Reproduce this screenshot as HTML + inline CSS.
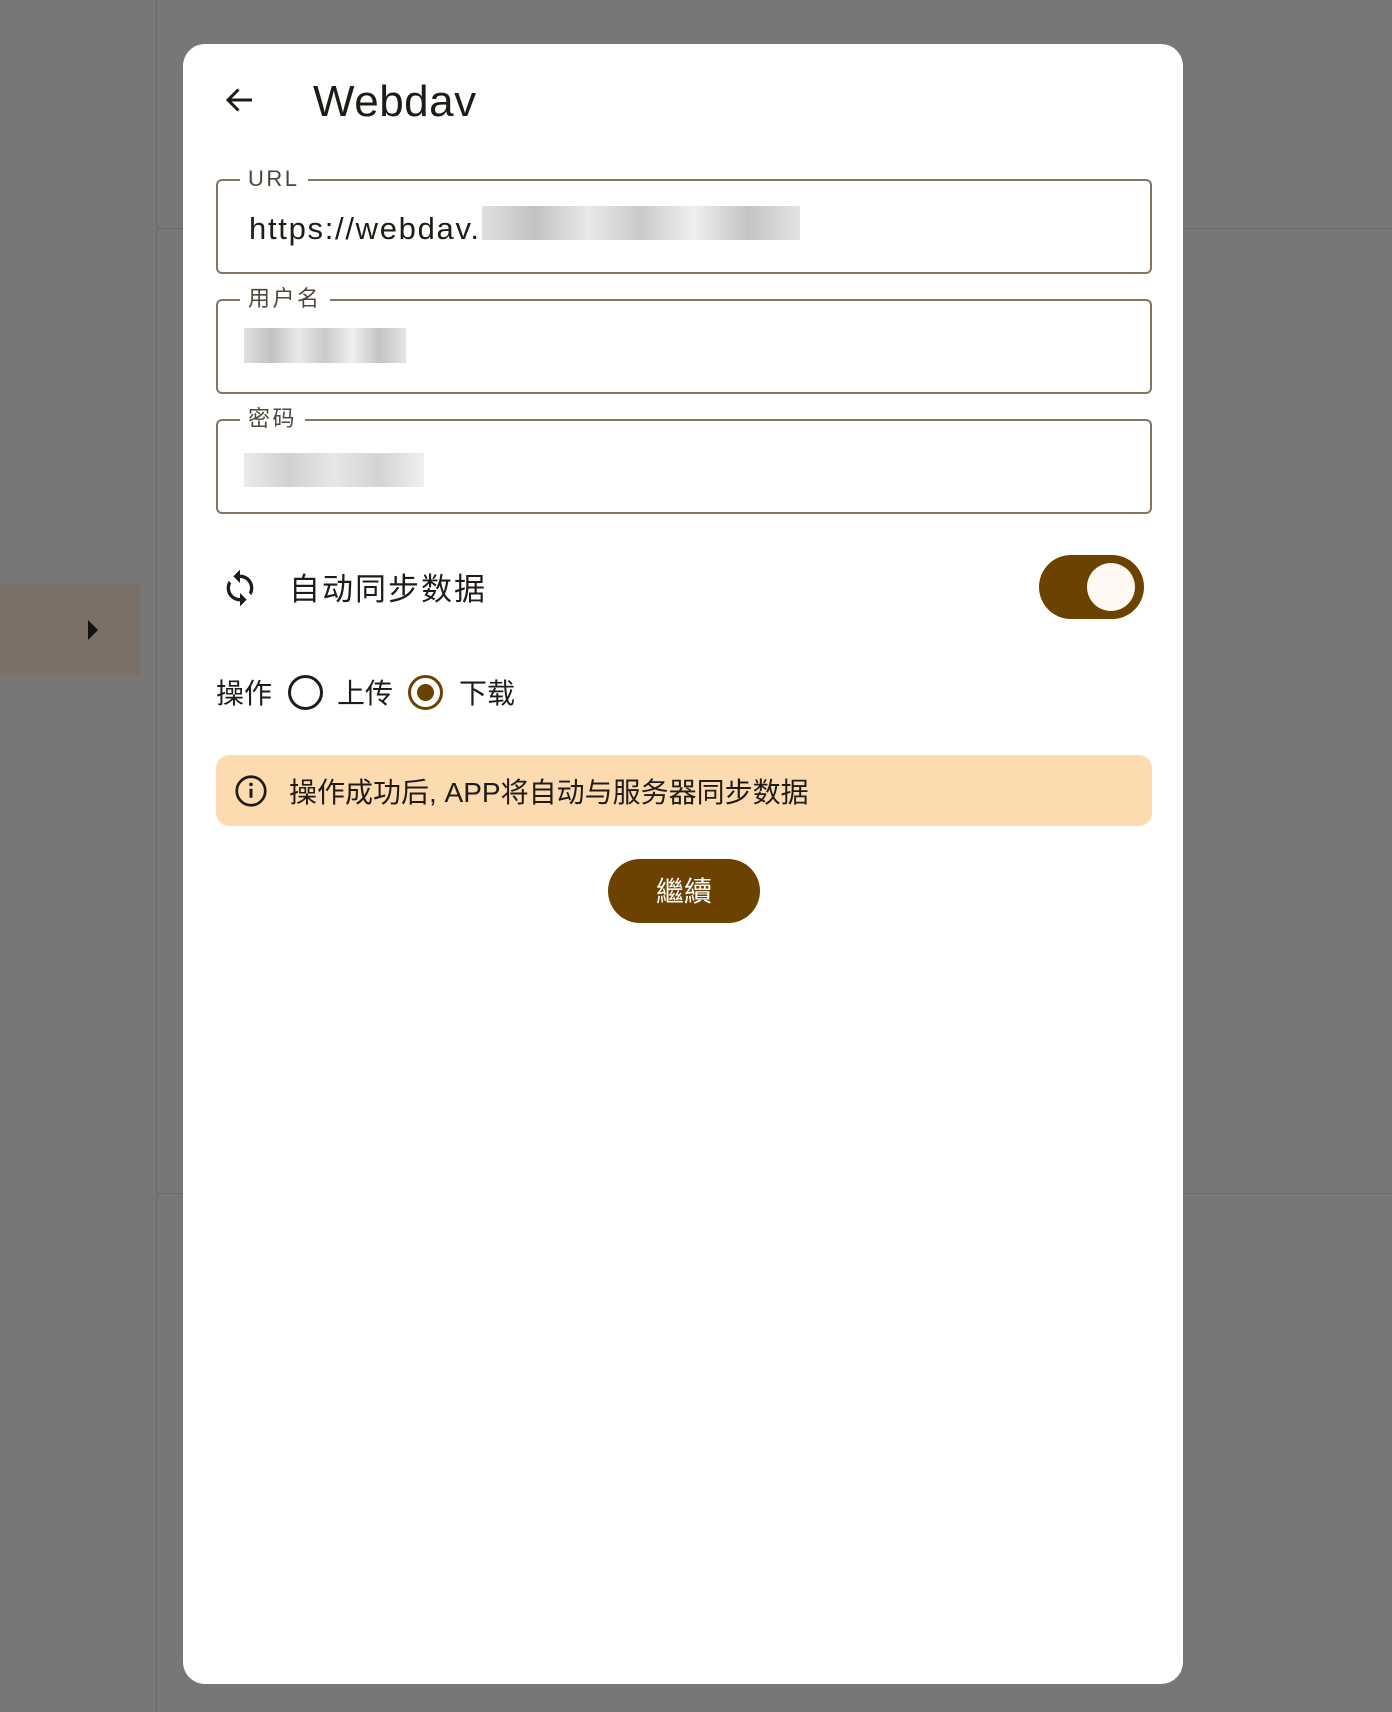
<!DOCTYPE html>
<html><head><meta charset="utf-8"><style>
*{margin:0;padding:0;box-sizing:border-box}
body{width:1392px;height:1712px;background:#777;position:relative;overflow:hidden;font-family:"Liberation Sans","Noto Sans CJK SC",sans-serif;color:#1f1b16}
.abs{position:absolute}
.field{position:absolute;left:216px;width:936px;height:95px;border:2px solid #857462;border-radius:6px}
.lbl{position:absolute;left:22px;top:-14px;background:#fff;padding:0 8px;font-size:22px;color:#4f4539;line-height:24px;letter-spacing:2.5px}
.blur{position:absolute;background:linear-gradient(90deg,#ddd,#bbb,#e6e6e6,#c4c4c4,#eee,#bdbdbd,#e0e0e0);opacity:.9}
</style></head><body>
<div class="abs" style="left:156px;top:0;width:1px;height:1712px;background:#6a6a6a"></div>
<div class="abs" style="left:156px;top:228px;width:1236px;height:1px;background:#6a6a6a"></div>
<div class="abs" style="left:156px;top:1193px;width:1236px;height:1px;background:#6a6a6a"></div>
<div class="abs" style="left:0;top:584px;width:140px;height:91px;background:#7b7068"></div>
<div class="abs" style="left:88px;top:620px;width:0;height:0;border-top:10px solid transparent;border-bottom:10px solid transparent;border-left:10px solid #111"></div>

<div class="abs" style="left:183px;top:44px;width:1000px;height:1640px;background:#fff;border-radius:22px"></div>

<svg class="abs" style="left:222px;top:82px" width="36" height="36" viewBox="0 0 24 24"><path d="M20 12H5M11 5l-7 7 7 7" fill="none" stroke="#1f1b16" stroke-width="2"/></svg>
<div class="abs" style="left:313px;top:76px;font-size:44px;line-height:52px;font-weight:500;letter-spacing:0.5px">Webdav</div>

<div class="field" style="top:179px"><div class="lbl">URL</div>
<div class="abs" style="left:31px;top:30px;font-size:31px;line-height:36px;color:#1f1b16;letter-spacing:1.7px">https://webdav.</div>
<div class="blur" style="left:264px;top:25px;width:318px;height:34px"></div></div>
<div class="field" style="top:299px"><div class="lbl">用户名</div>
<div class="blur" style="left:26px;top:27px;width:162px;height:35px"></div></div>
<div class="field" style="top:419px"><div class="lbl">密码</div>
<div class="blur" style="left:26px;top:32px;width:180px;height:34px;background:linear-gradient(90deg,#e8e8e8,#ccc,#e4e4e4,#cfcfcf,#eee)"></div></div>

<svg class="abs" style="left:220px;top:568px" width="40" height="40" viewBox="0 0 24 24"><path fill="#1f1b16" d="M12 4V1L8 5l4 4V6c3.31 0 6 2.69 6 6 0 1.010-.25 1.97-.7 2.8l1.46 1.46C19.540 15.03 20 13.57 20 12c0-4.42-3.58-8-8-8zm0 14c-3.31 0-6-2.69-6-6 0-1.01.25-1.97.7-2.8L5.24 7.74C4.46 8.97 4 10.43 4 12c0 4.42 3.58 8 8 8v3l4-4-4-4v3z"/></svg>
<div class="abs" style="left:289px;top:571px;font-size:31px;line-height:38px;letter-spacing:2px">自动同步数据</div>
<div class="abs" style="left:1039px;top:555px;width:105px;height:64px;border-radius:32px;background:#6b4200"></div>
<div class="abs" style="left:1087px;top:563px;width:48px;height:48px;border-radius:50%;background:#fff8f3"></div>

<div class="abs" style="left:216px;top:676px;font-size:28px;line-height:36px">操作</div>
<div class="abs" style="left:288px;top:675px;width:35px;height:35px;border-radius:50%;border:3.5px solid #1f1b16"></div>
<div class="abs" style="left:337px;top:676px;font-size:28px;line-height:36px">上传</div>
<div class="abs" style="left:408px;top:675px;width:35px;height:35px;border-radius:50%;border:3.5px solid #6b4200"></div>
<div class="abs" style="left:417px;top:684px;width:17px;height:17px;border-radius:50%;background:#6b4200"></div>
<div class="abs" style="left:459px;top:676px;font-size:28px;line-height:36px">下载</div>

<div class="abs" style="left:216px;top:755px;width:936px;height:71px;background:#fddbb0;border-radius:13px"></div>
<svg class="abs" style="left:233px;top:773px" width="36" height="36" viewBox="0 0 24 24"><circle cx="12" cy="12" r="9.5" fill="none" stroke="#1f1b16" stroke-width="1.8"/><path d="M12 10.5v6" stroke="#1f1b16" stroke-width="2"/><circle cx="12" cy="7.6" r="1.2" fill="#1f1b16"/></svg>
<div class="abs" style="left:289px;top:775px;font-size:28px;line-height:36px">操作成功后, APP将自动与服务器同步数据</div>

<div class="abs" style="left:608px;top:859px;width:152px;height:64px;border-radius:32px;background:#6b4200;color:#fff;font-size:28px;line-height:66px;text-align:center">繼續</div>
</body></html>
